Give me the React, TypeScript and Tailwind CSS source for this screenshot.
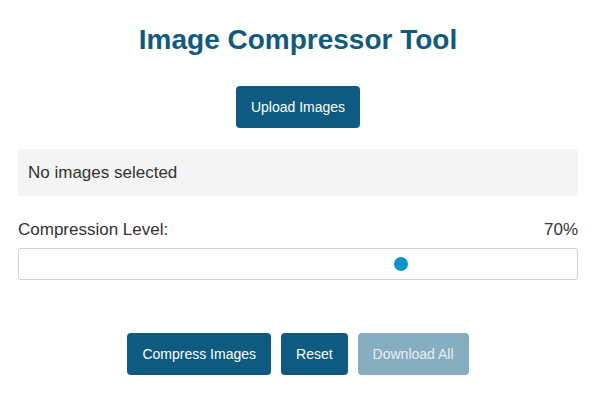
export default function App() {
  return (
    <div className="min-h-[399px] w-full bg-white pl-[18px] pr-[16px] pt-[23px] font-['Liberation_Sans',Arial,sans-serif] text-[#333333]">
      <h1 className="text-center text-[28px] font-bold leading-[34px] text-[#11597f]">
        Image Compressor Tool
      </h1>
      <div className="mt-[29px] flex justify-center">
        <button className="h-[42px] rounded-[4px] bg-[#0e5a80] px-[15px] text-[14px] leading-[20px] text-white">
          Upload Images
        </button>
      </div>
      <div className="mt-[21px] flex h-[47px] items-center rounded-[4px] bg-[#f4f4f4] px-[10px] text-[17px] leading-[20px] text-[#333333]">
        No images selected
      </div>
      <div className="mt-[24px] flex items-center justify-between text-[17px] leading-[20px] text-[#333333]">
        <span>Compression Level:</span>
        <span>70%</span>
      </div>
      <div className="relative mt-[8px] h-[32px] rounded-[3px] border border-[#cfcfcf] bg-white">
        <div className="absolute left-[375px] top-[8px] h-[14px] w-[14px] rounded-full bg-[#0b94c9]" />
      </div>
      <div className="mt-[53px] flex justify-center gap-[10px]">
        <button className="h-[42px] rounded-[4px] bg-[#0e5a80] px-[15px] text-[14px] leading-[20px] text-white">
          Compress Images
        </button>
        <button className="h-[42px] rounded-[4px] bg-[#0e5a80] px-[15px] text-[14px] leading-[20px] text-white">
          Reset
        </button>
        <button disabled className="h-[42px] rounded-[4px] bg-[#87adc0] px-[15px] text-[14px] leading-[20px] text-[#e7eef2]">
          Download All
        </button>
      </div>
    </div>
  );
}
